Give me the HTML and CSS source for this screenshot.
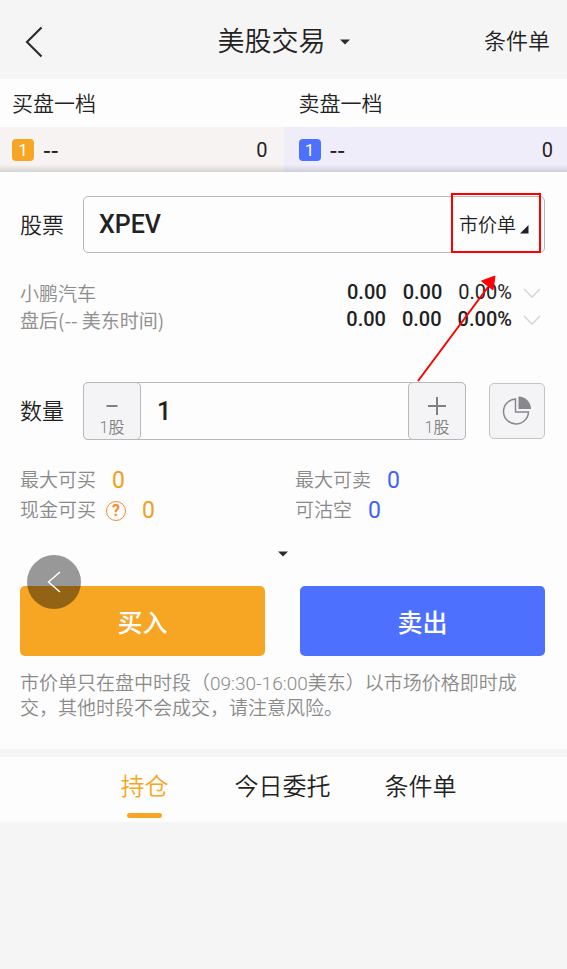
FILE: index.html
```html
<!DOCTYPE html>
<html lang="zh-CN">
<head>
<meta charset="utf-8">
<meta name="viewport" content="width=device-width, initial-scale=1">
<title>美股交易</title>
<link rel="stylesheet" href="styles.css">
</head>
<body>
<header class="topbar">
  <button class="back" type="button" aria-label="返回">
    <svg width="18" height="32" viewBox="0 0 18 32"><path d="M16.500 1.500 2 16l14.500 14.500" fill="none" stroke="#2e2e2e" stroke-width="2.200"/></svg>
  </button>
  <button class="title" type="button">美股交易
    <svg width="10" height="6" viewBox="0 0 10 6"><path d="M0 .5h10L5 5.500z" fill="#2b2b2b"/></svg>
  </button>
  <a class="toplink" href="#conditional">条件单</a>
</header>

<section class="book">
  <div class="side buy">
    <h2>买盘一档</h2>
    <div class="level"><span class="rank">1</span><span class="price">--</span><span class="volume">0</span></div>
  </div>
  <div class="side sell">
    <h2>卖盘一档</h2>
    <div class="level"><span class="rank">1</span><span class="price">--</span><span class="volume">0</span></div>
  </div>
</section>

<main class="ticket">
  <div class="row">
    <label for="symbol">股票</label>
    <div class="field">
      <input id="symbol" type="text" value="XPEV">
      <div class="type">
        <select aria-label="订单类型"><option>市价单</option></select>
        <svg class="corner" width="9" height="9" viewBox="0 0 9 9"><path d="M8.500 0v8.500H0z" fill="#222"/></svg>
      </div>
    </div>
  </div>

  <div class="quotes">
    <div class="quote">
      <span class="name">小鹏汽车</span>
      <b>0.00</b><b>0.00</b><span>0.00%</span>
      <svg width="18" height="10" viewBox="0 0 18 10"><path d="m1 1 8 8 8-8" fill="none" stroke="#d6d6d6" stroke-width="1.500"/></svg>
    </div>
    <div class="quote">
      <span class="name after">盘后(-- 美东时间)</span>
      <b>0.00</b><b>0.00</b><b>0.00%</b>
      <svg width="18" height="10" viewBox="0 0 18 10"><path d="m1 1 8 8 8-8" fill="none" stroke="#d6d6d6" stroke-width="1.500"/></svg>
    </div>
    <svg class="arrow" width="82" height="110" viewBox="0 0 82 110">
      <path d="M2 108 72 14" stroke="#fe0000" stroke-width="2"/>
      <path d="M79 3 65.500 8 77 17z" fill="#fe0000" stroke="#fe0000"/>
    </svg>
  </div>

  <div class="row">
    <label for="quantity">数量</label>
    <div class="stepper">
      <button type="button" aria-label="减少1股">
        <svg width="18" height="18" viewBox="0 0 18 18"><path d="M3.500 9h11" stroke="#808080" stroke-width="2"/></svg>
        <span>1股</span>
      </button>
      <input id="quantity" type="text" value="1">
      <button type="button" aria-label="增加1股">
        <svg width="18" height="18" viewBox="0 0 18 18"><path d="M0 9h18M9 0v18" stroke="#808080" stroke-width="2"/></svg>
        <span>1股</span>
      </button>
    </div>
    <button class="portion" type="button" aria-label="仓位比例">
      <svg width="30" height="30" viewBox="0 0 30 30"><path d="M13.500 3A12.500 12.500 0 1 0 26.500 16H13.500z" fill="none" stroke="#88888c" stroke-width="1.500"/><path d="M16.500.5A12.500 12.500 0 0 1 29 13H16.500z" fill="#88888c"/></svg>
    </button>
  </div>

  <div class="limits">
    <div><span>最大可买</span><strong>0</strong></div>
    <div class="short"><span>最大可卖</span><strong>0</strong></div>
    <div><span>现金可买</span>
      <button class="help" type="button" aria-label="说明">?</button><strong>0</strong></div>
    <div class="short"><span>可沽空</span><strong>0</strong></div>
  </div>

  <button class="expand" type="button" aria-label="展开">
    <svg width="10" height="6" viewBox="0 0 10 6"><path d="M0 .5h10L5 5.500z" fill="#2b2b2b"/></svg>
  </button>

  <div class="actions">
    <button class="action buy-action" type="button">买入</button>
    <button class="action sell-action" type="button">卖出</button>
    <button class="float" type="button" aria-label="收起">
      <svg width="14" height="22" viewBox="0 0 14 22"><path d="M13 1 1.500 11 13 21" fill="none" stroke="#fff" stroke-width="1.500"/></svg>
    </button>
  </div>

  <p class="notice">市价单只在盘中时段（09:30-16:00美东）以市场价格即时成交，其他时段不会成交，请注意风险。</p>
</main>

<nav class="tabs">
  <a class="active" href="#positions">持仓</a>
  <a href="#orders">今日委托</a>
  <a href="#conditional">条件单</a>
</nav>
</body>
</html>
```

FILE: styles.css
```css
* {
  box-sizing: border-box;
}

body {
  margin: 0;
  min-height: 100vh;
  background: #f5f5f5;
  color: #222;
  font-family: Roboto, "Noto Sans CJK SC", sans-serif;
  font-weight: 350;
}

button,
input,
select {
  margin: 0;
  padding: 0;
  border: 0;
  background: none;
  color: inherit;
  font: inherit;
}

svg {
  display: block;
  flex: none;
}

a {
  color: inherit;
  text-decoration: none;
}

.topbar {
  display: grid;
  grid-template-columns: 1fr auto 1fr;
  align-items: center;
  height: 79px;
  padding: 4px 17px 0;
}

.back {
  justify-self: start;
  padding-left: 8px;
}

.title {
  display: flex;
  align-items: center;
  gap: 14px;
  font-size: 27px;
  line-height: 36px;
}

.toplink {
  justify-self: end;
  font-size: 22px;
  line-height: 28px;
}

.book {
  display: grid;
  grid-template-columns: 1fr 1fr;
  background: #fdfdfd;
}

.book h2 {
  margin: 0;
  padding: 2px 0 0 12px;
  font-size: 21px;
  font-weight: 350;
  line-height: 46px;
}

.sell h2 {
  padding-left: 15px;
}

.level {
  display: flex;
  align-items: center;
  gap: 9px;
  height: 45px;
  padding: 0 16px 0 12px;
  background: linear-gradient(#f7f3f2 84%, #d8d3d3);
  font-size: 20px;
  font-weight: 400;
}

.sell .level {
  padding: 0 14px 0 15px;
  background: linear-gradient(#efedf9 84%, #cfcddb);
}

.rank {
  width: 22px;
  border-radius: 4px;
  background: #f6a623;
  color: #fff;
  font-size: 17px;
  line-height: 22px;
  text-align: center;
}

.sell .rank {
  background: #4d70ff;
}

.price {
  padding-bottom: 4px;
  font-family: "Noto Sans CJK SC", sans-serif;
  font-size: 22px;
  font-weight: 500;
  line-height: 28px;
}

.volume {
  margin-left: auto;
}

.ticket {
  padding: 24px 22px 28px 20px;
  background: #fdfdfd;
}

.row {
  display: flex;
  align-items: center;
}

.row label {
  flex: none;
  width: 63px;
  padding-top: 2px;
  font-size: 22px;
  line-height: 28px;
}

.row input {
  flex: 1;
  min-width: 0;
  font-size: 25px;
  font-weight: 500;
}

.field {
  display: flex;
  flex: 1;
  min-width: 0;
  height: 57px;
  padding-left: 15px;
  border: 1px solid #b8b8b8;
  border-radius: 5px;
}

.type {
  position: relative;
  width: 90px;
  margin: -4px 3px -1px 0;
  border: 2px solid #fe0000;
}

.type select {
  width: 100%;
  height: 100%;
  padding: 4px 0 0 6px;
  appearance: none;
  font-size: 19px;
}

.corner {
  position: absolute;
  right: 10px;
  bottom: 17px;
}

.quotes {
  position: relative;
  margin: 26px 0 49px;
}

.quote {
  display: flex;
  align-items: center;
  gap: 16px;
  padding-right: 4px;
  font-size: 20px;
  font-weight: 400;
  line-height: 27px;
}

.quote b {
  font-weight: 500;
}

.quote svg {
  margin-left: -5px;
}

.quote .name {
  flex: 1;
  color: #8a8a8a;
  font-family: "Noto Sans CJK SC", sans-serif;
  font-size: 19px;
  font-weight: 350;
}

.quote .after {
  color: #929292;
  font-weight: 400;
}

.arrow {
  position: absolute;
  right: 47px;
  top: -6px;
}

.stepper {
  display: flex;
  flex: 1;
  min-width: 0;
  height: 58px;
  border: 1px solid #b8b8b8;
  border-radius: 5px;
}

.stepper input {
  padding-left: 17px;
}

.stepper button {
  display: flex;
  flex: none;
  flex-direction: column;
  align-items: center;
  gap: 1px;
  width: 58px;
  margin: -1px;
  padding-top: 14px;
  border: 1px solid #b8b8b8;
  border-radius: 5px;
  background: #f4f4f6;
  color: #808080;
  font-size: 16px;
  line-height: 24px;
}

.portion {
  display: grid;
  flex: none;
  place-items: center;
  width: 56px;
  height: 56px;
  margin-left: 23px;
  border: 1px solid #c4c4c4;
  border-radius: 5px;
  background: #f4f4f6;
}

.limits {
  display: grid;
  grid-template-columns: 275px 1fr;
  margin-top: 26px;
  color: #8a8a8a;
  font-size: 19px;
  line-height: 30px;
}

.limits div {
  display: flex;
  align-items: center;
}

.limits strong {
  margin-left: 16px;
  color: #f0a020;
  font-size: 23px;
  font-weight: 400;
}

.limits .short strong {
  color: #4262f5;
}

.help {
  width: 20px;
  height: 20px;
  margin-left: 10px;
  border: 1px solid #f58a2c;
  border-radius: 50%;
  color: #f58a2c;
  font-size: 16px;
  font-weight: 700;
  line-height: 18px;
}

.expand {
  display: grid;
  place-items: center;
  width: 100%;
  height: 60px;
  padding-bottom: 4px;
}

.actions {
  position: relative;
  display: grid;
  grid-template-columns: 1fr 1fr;
  gap: 35px;
}

.action {
  height: 70px;
  border-radius: 5px;
  color: #fff;
  font-size: 25px;
  font-weight: 500;
}

.buy-action {
  background: #f6a623;
}

.sell-action {
  background: #4d70ff;
}

.float {
  position: absolute;
  left: 7px;
  top: -31px;
  display: grid;
  place-items: center;
  width: 54px;
  height: 54px;
  border-radius: 50%;
  background: rgb(0 0 0 / 40%);
}

.notice {
  margin: 15px 0 0;
  color: #8a8a8a;
  font-size: 19px;
  line-height: 25px;
}

.tabs {
  display: grid;
  grid-template-columns: repeat(3, 138px);
  justify-content: center;
  margin-top: 8px;
  padding-right: 2px;
  background: #fdfdfd;
  font-size: 24px;
  line-height: 60px;
  text-align: center;
}

.tabs a {
  height: 65px;
}

.active {
  color: #f6a623;
}

.active::after {
  content: "";
  display: block;
  width: 35px;
  height: 5px;
  margin: -4px auto 0;
  border-radius: 3px;
  background: #f6a623;
}
```
